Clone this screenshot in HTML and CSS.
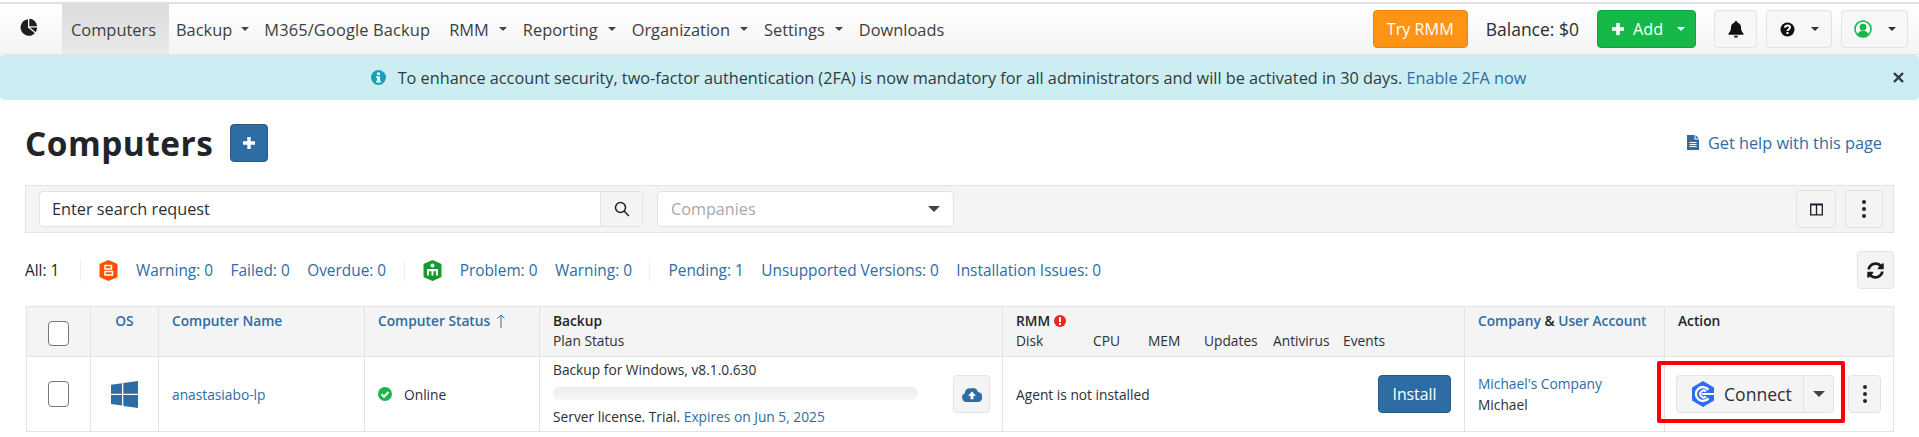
FILE: index.html
```html
<!DOCTYPE html>
<html lang="en">
<head>
<meta charset="utf-8">
<title>Computers</title>
<link rel="stylesheet" href="styles.css">
</head>
<body>
<div class="topline"></div>
<nav class="nav">
  <a class="logo"><svg width="20" height="20" viewBox="0 0 24 24"><path fill="#1f1f1f" d="M10.800 2.600A10 10 0 1 0 19 19.600L10.800 12.600Z"/><path fill="#1f1f1f" d="M12.400 2v9h9.400A9.800 9.800 0 0 0 12.400 2Z"/><path fill="#1f1f1f" d="M13.200 12.600h8.600a10 10 0 0 1-1.900 5.600Z"/></svg></a>
  <a class="item active">Computers</a>
  <a class="item tight">Backup<i class="caret"></i></a>
  <a class="item wide">M365/Google Backup</a>
  <a class="item">RMM<i class="caret"></i></a>
  <a class="item">Reporting<i class="caret"></i></a>
  <a class="item">Organization<i class="caret"></i></a>
  <a class="item">Settings<i class="caret"></i></a>
  <a class="item">Downloads</a>
  <div class="nav-right">
    <a class="btn-try">Try RMM</a>
    <span class="balance">Balance: $0</span>
    <a class="btn-add"><svg width="14" height="14" viewBox="0 0 14 14"><path fill="#fff" d="M5.200 1h3.600v4.200H13v3.600H8.800V13H5.200V8.800H1V5.200h4.200Z"/></svg>Add<i class="caret light"></i></a>
    <a class="btn-tool bell"><svg width="16" height="17" viewBox="0 0 16 17"><path fill="#111" d="M8 0a1.300 1.300 0 0 0-1.300 1.400C4.200 2 3 4 3 6.300c0 3.800-1.500 5-2.500 6.300-.3.500 0 1.100.6 1.100h13.800c.6 0 .9-.6.600-1.100C14.500 11.300 13 10.100 13 6.300 13 4 11.800 2 9.300 1.400A1.300 1.300 0 0 0 8 0ZM6 14.700a2 2 0 0 0 4 0Z"/></svg></a>
    <a class="btn-tool help"><svg width="15" height="15" viewBox="0 0 15 15"><circle cx="7.500" cy="7.500" r="7" fill="#111"/><path fill="none" stroke="#fff" stroke-width="2" d="M5 5.800c0-1.500 1.100-2.200 2.500-2.200S10 4.400 10 5.600c0 1.600-2.500 1.700-2.500 3.400"/><rect x="6.500" y="10" width="2" height="2" fill="#fff"/></svg><i class="caret dark"></i></a>
    <a class="btn-tool user"><svg width="18" height="18" viewBox="0 0 18 18"><circle cx="9" cy="9" r="8" fill="#fff" stroke="#16b84a" stroke-width="1.600"/><circle cx="9" cy="7.200" r="3.400" fill="#16b84a"/><path fill="#16b84a" d="M3.500 14.500c.8-2.800 3-3.700 5.500-3.700s4.700.9 5.500 3.700A8 8 0 0 1 9 17a8 8 0 0 1-5.500-2.500Z"/></svg><i class="caret dark"></i></a>
  </div>
</nav>
<div class="alert">
  <svg class="alert-icon" width="15" height="15" viewBox="0 0 15 15"><circle cx="7.500" cy="7.500" r="7.500" fill="#17a2b8"/><rect x="6" y="2.500" width="3" height="2.500" fill="#fff"/><path fill="#fff" d="M5.200 6.200h3.800v4.600h1v1.700H5.200v-1.700h1V7.900h-1Z"/></svg>
  <span>To enhance account security, two-factor authentication (2FA) is now mandatory for all administrators and will be activated in 30 days. <a class="link">Enable 2FA now</a></span>
  <svg class="alert-close" width="11" height="11" viewBox="0 0 11 11"><path stroke="#2e3a40" stroke-width="2.400" d="M1 1l9 9M10 1l-9 9"/></svg>
</div>
<main class="page">
  <header class="title-row">
    <h1>Computers</h1>
    <a class="btn-blue-add"><svg width="14" height="14" viewBox="0 0 14 14"><path fill="#fff" d="M5.300 1h3.400v4.300H13v3.400H8.700V13H5.300V8.700H1V5.300h4.300Z"/></svg></a>
    <a class="help-link"><svg width="12" height="15" viewBox="0 0 12 15"><path fill="#2e6ca4" d="M0 0h7.500v4.500H12V15H0Z"/><path fill="#2e6ca4" d="M8.500 0 12 3.500H8.500Z"/><path stroke="#fff" d="M2.500 7.500h7M2.500 9.500h7M2.500 11.500h7"/></svg>Get help with this page</a>
  </header>
  <section class="toolbar">
    <div class="search"><span class="search-text">Enter search request</span><span class="search-btn"><svg width="16" height="16" viewBox="0 0 16 16"><circle cx="6.500" cy="6.500" r="5" fill="none" stroke="#222" stroke-width="1.500"/><path stroke="#222" stroke-width="1.500" d="M10 10l5 5"/></svg></span></div>
    <div class="select"><span>Companies</span><i class="caret big"></i></div>
    <a class="tool-btn columns"><svg width="13" height="13" viewBox="0 0 13 13"><path fill="none" stroke="#1b1b2b" stroke-width="1.300" d="M.7 1.200h11.600v10.600H.7ZM6.500 1.200v10.600"/><path stroke="#1b1b2b" stroke-width="1.500" d="M.7 1.700h11.600"/></svg></a>
    <a class="tool-btn kebab"><i></i><i></i><i></i></a>
  </section>
  <section class="stats">
    <span class="all">All: 1</span>
    <span class="sep"></span>
    <svg class="hex" width="19" height="21" viewBox="0 0 19 21"><path fill="#ff5000" d="M9.500 0l8 3.500a1.500 1.500 0 0 1 1 1.400v11.200a1.500 1.500 0 0 1-1 1.400l-8 3.500-8-3.500a1.500 1.500 0 0 1-1-1.400V4.900a1.500 1.500 0 0 1 1-1.400Z"/><path fill="none" stroke="#fff" stroke-width="1.500" d="M6 5.500h6.500v3.500H6ZM6 11.500h7.500V15H6Z"/></svg>
    <a class="stat">Warning: 0</a><a class="stat">Failed: 0</a><a class="stat">Overdue: 0</a>
    <span class="sep"></span>
    <svg class="hex" width="19" height="21" viewBox="0 0 19 21"><path fill="#159a2b" d="M9.500 0l8 3.500a1.500 1.500 0 0 1 1 1.400v11.200a1.500 1.500 0 0 1-1 1.400l-8 3.500-8-3.500a1.500 1.500 0 0 1-1-1.400V4.900a1.500 1.500 0 0 1 1-1.400Z"/><circle cx="9.500" cy="5.500" r="2" fill="#fff"/><path fill="#fff" d="M4 9h11v6.500h-2v-4.300h-2.500v4.300h-2v-4.300H6v4.300H4Z"/></svg>
    <a class="stat">Problem: 0</a><a class="stat">Warning: 0</a>
    <span class="sep three"></span>
    <a class="stat">Pending: 1</a><a class="stat">Unsupported Versions: 0</a><a class="stat">Installation Issues: 0</a>
    <a class="refresh"><svg width="17" height="17" viewBox="0 0 512 512"><path fill="#1b1b1b" d="M370.700 133.300C339.500 104 298.900 88 255.800 88c-77.500.1-144.300 53.200-162.800 126.900-1.300 5.400-6.100 9.100-11.700 9.100H24.100c-7.500 0-13.200-6.800-11.800-14.200C33.900 94.900 134.800 8 256 8c66.400 0 126.800 26.100 171.300 68.700L463 41c15.100-15.100 41-4.400 41 17v134c0 13.300-10.700 24-24 24H346c-21.400 0-32.100-25.900-17-41ZM32 296h134c21.400 0 32.100 25.900 17 41l-41.700 41.700c31.200 29.300 71.800 45.300 114.900 45.300 77.400-.1 144.300-53.100 162.800-126.800 1.300-5.400 6.100-9.100 11.700-9.100h57.300c7.500 0 13.200 6.800 11.800 14.200C478.100 417.100 377.200 504 256 504c-66.400 0-126.800-26.100-171.300-68.700L49 471c-15.100 15.100-41 4.400-41-17V320c0-13.300 10.700-24 24-24Z"/></svg></a>
  </section>
  <div class="table-wrap">
    <table class="grid">
      <colgroup><col class="c1"><col class="c2"><col class="c3"><col class="c4"><col class="c5"><col class="c6"><col class="c7"><col class="c8"></colgroup>
      <thead>
        <tr>
          <th class="center"><span class="check"></span></th>
          <th class="center"><a class="th-link">OS</a></th>
          <th><a class="th-link">Computer Name</a></th>
          <th><a class="th-link">Computer Status <svg class="arrow" width="10" height="14" viewBox="0 0 10 14"><path fill="none" stroke="#2e6ca4" d="M5 14V1M1.500 4.500 5 1l3.500 3.500"/></svg></a></th>
          <th><div>Backup</div><div class="sub">Plan Status</div></th>
          <th><div class="rmm-title">RMM <svg width="12" height="12" viewBox="0 0 12 12"><circle cx="6" cy="6" r="6" fill="#e8281f"/><rect x="5" y="2.200" width="2" height="4.800" fill="#fff"/><rect x="5" y="8" width="2" height="2" fill="#fff"/></svg></div><div class="sub rmm-cols"><span class="r1">Disk</span><span class="r2">CPU</span><span class="r3">MEM</span><span class="r4">Updates</span><span class="r5">Antivirus</span><span>Events</span></div></th>
          <th><a class="th-link">Company</a> &amp; <a class="th-link">User Account</a></th>
          <th>Action</th>
        </tr>
      </thead>
      <tbody>
        <tr>
          <td class="center"><span class="check tall"></span></td>
          <td class="center"><svg class="win" width="27" height="27" viewBox="0 0 27 27"><path fill="#2e6ca4" d="M0 3.800 11 2.300v10.400H0ZM12.300 2.100 27 0v12.700H12.300ZM0 14h11v10.500L0 23ZM12.300 14H27v13l-14.700-2.100Z"/></svg></td>
          <td><a class="link">anastasiabo-lp</a></td>
          <td><span class="online"><svg width="14" height="14" viewBox="0 0 14 14"><circle cx="7" cy="7" r="7" fill="#16b84a"/><path fill="none" stroke="#fff" stroke-width="2.200" d="M3.500 7.200 6 9.700l4.500-4.800"/></svg>Online</span></td>
          <td class="backup-cell">
            <div class="backup-info">
              <div class="plan">Backup for Windows, v8.1.0.630</div>
              <div class="progress"></div>
              <div>Server license. Trial. <a class="link">Expires on Jun 5, 2025</a></div>
            </div>
            <a class="cloud-btn"><svg width="20" height="15" viewBox="0 0 20 15"><path fill="#2e6ca4" d="M4.500 15A4.500 4.500 0 0 1 3 6.300 4.500 4.500 0 0 1 9 1.500 5 5 0 0 1 16 5a5 5 0 0 1-1 10Z"/><path fill="#fff" d="M10 4.500 14 8.700h-2.500v3.500h-3V8.700H6Z"/></svg></a>
          </td>
          <td><div class="rmm-cell"><span>Agent is not installed</span><a class="btn-install">Install</a></div></td>
          <td class="company"><a class="link">Michael's Company</a><div>Michael</div></td>
          <td>
            <div class="actions">
              <div class="connect">
                <span class="connect-main"><svg width="24" height="26" viewBox="0 0 24 26"><path fill="#2f6bf0" d="M12 0l11 6.500v13L12 26 1 19.500v-13Z"/><path fill="none" stroke="#fff" stroke-width="2.300" d="M17.500 8.800a7 7 0 1 0 0 8.400"/><path fill="none" stroke="#fff" stroke-width="2" d="M15 10.500a3.400 3.400 0 1 0 0 5"/><path stroke="#fff" stroke-width="2" d="M11 13h12"/></svg>Connect</span>
                <span class="connect-caret"><i class="caret big"></i></span>
              </div>
              <a class="tool-btn kebab row"><i></i><i></i><i></i></a>
            </div>
          </td>
        </tr>
      </tbody>
    </table>
    <div class="highlight"></div>
  </div>
</main>
</body>
</html>
```
FILE: styles.css
```css
* { box-sizing: border-box; }
html, body { margin: 0; padding: 0; }
body { font-family: "Open Sans", sans-serif; font-size: 14px; color: #212529; background: #fff; overflow: hidden; height: 437px; }
a { text-decoration: none; }
.link { color: #2e6ca4; }
.topline { height: 4px; border-top: 2px solid #fff; background: #e0e0e0; }

.nav { height: 51px; display: flex; align-items: stretch; background: linear-gradient(#fff, #f4f4f4); border-bottom: 1px solid #e4e4e4; font-size: 16.400px; color: #3d3d3d; }
.logo { width: 62px; display: flex; align-items: center; justify-content: center; padding: 0 5px 4px 0; }
.item { display: flex; align-items: center; padding: 0 8px; color: #3b3f44; white-space: nowrap; }
.item.active { width: 107px; justify-content: center; background: linear-gradient(#dcdcdc, #e9e9e9); padding: 0 4px 0 0; }
.item.tight { padding: 0 7px; }
.item.tight .caret { margin-left: 9px; }
.item.wide { letter-spacing: .15px; padding-right: 11px; }
.caret { display: inline-block; width: 0; height: 0; border-left: 4px solid transparent; border-right: 4px solid transparent; border-top: 4px solid #444; margin-left: 10px; }
.caret.light { border-top-color: #fff; margin-left: 14px; }
.caret.dark { border-top-color: #333; margin-left: 16px; }
.caret.big { border-left-width: 6px; border-right-width: 6px; border-top-width: 6px; border-top-color: #444; margin-left: 0; }
.nav-right { margin-left: auto; display: flex; align-items: center; padding-right: 11px; }
.btn-try { width: 95px; height: 38px; display: flex; align-items: center; justify-content: center; background: #ff9314; border: 1px solid #e8850f; border-radius: 4px; color: #fff; font-size: 16.200px; }
.balance { margin: 0 18px; color: #2a2e33; font-size: 17.500px; }
.btn-add { width: 99px; height: 38px; display: flex; align-items: center; padding-left: 13px; background: #16b84a; border: 1px solid #12a03f; border-radius: 4px; color: #fff; font-size: 16.200px; }
.btn-add svg { margin-right: 8px; }
.btn-tool { height: 38px; display: flex; align-items: center; justify-content: center; background: #f7f7f7; border: 1px solid #e3e3e3; border-radius: 4px; }
.bell { width: 43px; margin-left: 18px; }
.help { width: 66px; margin-left: 9px; }
.user { width: 67px; margin-left: 9px; }

.alert { height: 45px; display: flex; align-items: center; justify-content: center; position: relative; background: #cceef2; border-radius: 4px; padding-right: 22px; font-size: 16.250px; color: #2e3a40; }
.alert-icon { margin-right: 12px; }
.alert-close { position: absolute; right: 15px; top: 17px; }

.page { padding: 0 25px 0 25px; }
.title-row { height: 85px; display: flex; align-items: center; }
.title-row h1 { margin: 0; font-size: 33.400px; font-weight: 700; color: #212529; letter-spacing: .5px; }
.btn-blue-add { width: 38px; height: 38px; margin-left: 17px; display: flex; align-items: center; justify-content: center; background: #2e6ca4; border: 1px solid #255a8a; border-radius: 4px; }
.help-link { margin-left: auto; margin-right: 12px; display: flex; align-items: center; color: #2e6ca4; font-size: 16.300px; }
.help-link svg { margin-right: 9px; }

.toolbar { height: 48px; display: flex; align-items: center; background: #f4f4f4; border: 1px solid #e3e3e3; padding: 0 10px 0 13px; }
.search { width: 604px; height: 36px; display: flex; background: #fff; border: 1px solid #e3e3e3; border-radius: 4px; }
.search-text { flex: 1; padding-left: 12px; line-height: 34px; font-size: 16.300px; color: #2b2f33; }
.search-btn { width: 42px; display: flex; align-items: center; justify-content: center; background: #f4f4f4; border-left: 1px solid #e3e3e3; border-radius: 0 4px 4px 0; }
.select { width: 297px; height: 36px; margin-left: 14px; display: flex; align-items: center; justify-content: space-between; padding: 0 13px; background: #fff; border: 1px solid #e3e3e3; border-radius: 4px; font-size: 16.200px; color: #a9a9a9; }
.tool-btn { height: 38px; display: flex; align-items: center; justify-content: center; background: #f4f4f4; border: 1px solid #e3e3e3; border-radius: 4px; }
.columns { width: 40px; margin-left: auto; }
.kebab { width: 38px; margin-left: 9px; flex-direction: column; gap: 3px; }
.kebab i { width: 4px; height: 4px; border-radius: 50%; background: #23272b; }

.stats { height: 56px; display: flex; align-items: center; padding-top: 18px; color: #2e6ca4; font-size: 15.400px; }
.all { color: #212529; width: 55px; }
.sep { width: 1px; height: 22px; background: #f0f0f0; }
.sep.three { margin-right: 18px; }
.hex { margin: 0 18px 0 18px; }
.stat { margin-right: 17.500px; white-space: nowrap; }
.refresh { margin-left: auto; width: 37px; height: 38px; display: flex; align-items: center; justify-content: center; background: #f4f4f4; border: 1px solid #e3e3e3; border-radius: 4px; }

.table-wrap { position: relative; margin-top: 17px; margin-left: 1px; margin-right: 0; }
.grid { width: 100%; table-layout: fixed; border-collapse: collapse; font-size: 13.750px; }
.grid th, .grid td { border: 1px solid #e3e3e3; vertical-align: middle; padding: 0 13px; }
.grid th { height: 50px; background: #f4f4f4; text-align: left; vertical-align: top; padding-top: 4px; line-height: 20px; font-weight: 600; color: #212529; }
.grid td { height: 75px; color: #2c3035; }
.c1 { width: 64px; } .c2 { width: 68px; } .c3 { width: 206px; } .c4 { width: 175px; } .c5 { width: 463px; } .c6 { width: 462px; } .c7 { width: 200px; } .c8 { width: 229px; }
.grid th.center, .grid td.center { text-align: center; padding: 4px 0 0; }
.grid td.center { padding: 0; }
.th-link { color: #2e6ca4; }
.arrow { vertical-align: -2px; margin-left: 2px; }
.sub { font-weight: 400; color: #2c3035; }
.rmm-title svg { vertical-align: -1px; }
.rmm-cols { display: flex; }
.r1 { width: 77px; } .r2 { width: 55px; } .r3 { width: 56px; } .r4 { width: 69px; } .r5 { width: 70px; }
.check { display: inline-block; width: 21px; height: 25px; background: #fff; border: 1px solid #777; border-radius: 4px; margin-top: 10px; vertical-align: top; }
.check.tall { height: 26px; margin-top: 0; vertical-align: middle; }
.win { display: block; margin: 0 auto; }
.online { display: flex; align-items: center; }
.online svg { margin-right: 12px; }
.grid td.backup-cell { padding: 0 12px 0 13px; }
.backup-cell { position: relative; }
.backup-info { width: 365px; display: flex; flex-direction: column; height: 74px; padding: 3px 0 5px; justify-content: space-between; }
.progress { height: 13px; background: linear-gradient(#eeeeee, #f6f6f6); border-radius: 6px; }
.cloud-btn { position: absolute; right: 12px; top: 18px; width: 37px; height: 38px; display: flex; align-items: center; justify-content: center; background: #f4f4f4; border: 1px solid #e3e3e3; border-radius: 4px; }
.rmm-cell { display: flex; align-items: center; justify-content: space-between; }
.btn-install { width: 73px; height: 38px; display: flex; align-items: center; justify-content: center; background: #2e6ca4; border: 1px solid #255a8a; border-radius: 4px; color: #fff; font-size: 15.800px; }
.grid td.company { line-height: 21px; }
.actions { display: flex; align-items: center; }
.grid td:last-child { padding: 0 0 0 11px; }
.connect { width: 158px; height: 38px; display: flex; background: #f4f4f4; border: 1px solid #e3e3e3; border-radius: 4px; }
.connect-main { flex: 1; display: flex; align-items: center; padding-left: 14px; font-size: 17.600px; color: #2c3035; }
.connect-main svg { margin-right: 9px; }
.connect-caret { width: 30px; display: flex; align-items: center; justify-content: center; border-left: 1px solid #e3e3e3; }
.kebab.row { width: 33px; margin-left: 14px; }
.highlight { position: absolute; left: 1631px; top: 55px; width: 188px; height: 62px; border: 4px solid #f00; border-radius: 2px; pointer-events: none; }
```
